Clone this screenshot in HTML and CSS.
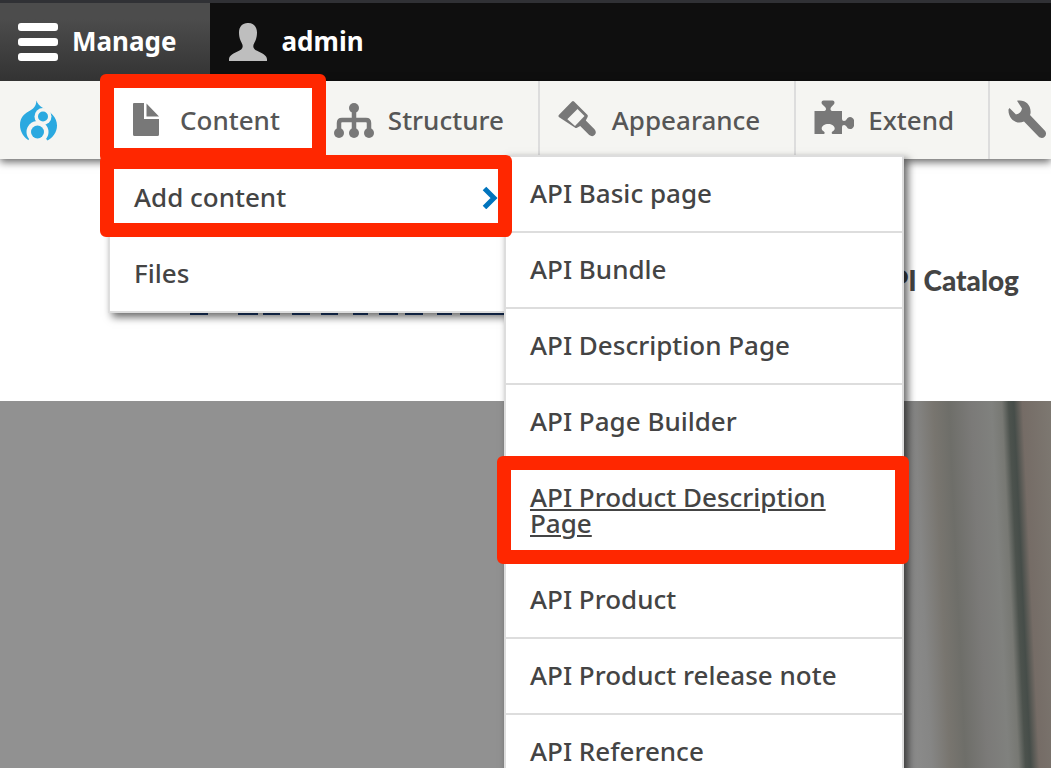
FILE: index.html
```
<!DOCTYPE html>
<html lang="en">
<head>
<meta charset="utf-8">
<title>API Catalog</title>
<link rel="stylesheet" href="styles.css">
</head>
<body>
<div class="page">
  <header class="toolbar">
    <div class="bar">
      <button class="bar-tab is-active" type="button">
        <svg class="bar-icon" viewBox="0 0 40 40" aria-hidden="true"><g fill="#fff"><rect y="2" width="40" height="8" rx="3"/><rect y="17" width="40" height="8" rx="3"/><rect y="32" width="40" height="8" rx="3"/></g></svg>
        Manage
      </button>
      <button class="bar-tab" type="button">
        <svg class="bar-icon" viewBox="0 0 40 40" aria-hidden="true"><path fill="#bebebe" d="M20 2c-5.300-.2-9 3.600-9 9.500 0 3 .4 5.200 1.500 8 .9 2.400 2.200 3.600 2.200 5.800 0 2.600-2.300 4-5.200 5.200C5.500 32.200 1 34.500 1 38.500V40h38v-1.500c0-4-4.500-6.300-8.500-8-2.900-1.200-5.200-2.600-5.200-5.200 0-2.200 1.300-3.400 2.200-5.800 1.100-2.800 1.500-5 1.500-8C29 5.600 25.300 1.800 20 2z"/></svg>
        admin
      </button>
    </div>
    <nav class="tray" aria-label="Administration">
      <ul class="menu">
        <li class="menu-item menu-home">
          <a class="menu-link" href="#" aria-label="Home">
            <svg class="logo" viewBox="0 0 38 42" aria-hidden="true"><path fill="#2ba9e0" d="M16.500.5c.8 3.500 3.300 5.500 6.500 7.500C30.500 12 37 17 37 25.500c0 6.500-4 12.500-10.500 15.500H10C4 38 0 32 0 25c0-7 4-11 8.500-13.500C13.500 9 16 6.500 16.500.5z"/><g fill="#f5f5f2"><circle cx="23" cy="16.500" r="8.500"/><circle cx="17.500" cy="32" r="11"/><path d="M9.500 38h16l3 4h-21z"/></g><g fill="#2ba9e0"><circle cx="23" cy="16.500" r="5"/><circle cx="17.500" cy="32" r="6.500"/></g></svg>
          </a>
        </li>
        <li class="menu-item is-open">
          <a class="menu-link" href="#">
            <svg class="menu-icon" viewBox="0 0 40 40" aria-hidden="true"><path fill="#787878" d="M8 3h10v16h15v15.500q0 1.500-1.500 1.500h-23Q7 36 7 34.500V4q0-1 1-1zM20.500 3.500L33 16.500H20.500z"/></svg>
            Content
          </a>
          <ul class="submenu">
            <li class="submenu-item">
              <a class="submenu-link" href="#">Add content
                <svg class="chevron" viewBox="0 0 16 24" aria-hidden="true"><path fill="none" stroke="#0074bd" stroke-width="5" d="M2.500 3.500L12 13l-9.500 9.500"/></svg>
              </a>
              <ul class="submenu submenu-nested">
                <li class="submenu-item"><a class="submenu-link" href="#">API Basic page</a></li>
                <li class="submenu-item"><a class="submenu-link" href="#">API Bundle</a></li>
                <li class="submenu-item"><a class="submenu-link" href="#">API Description Page</a></li>
                <li class="submenu-item"><a class="submenu-link" href="#">API Page Builder</a></li>
                <li class="submenu-item"><a class="submenu-link is-hovered" href="#">API Product Description Page</a><span class="mark mark-target"></span></li>
                <li class="submenu-item"><a class="submenu-link" href="#">API Product</a></li>
                <li class="submenu-item"><a class="submenu-link" href="#">API Product release note</a></li>
                <li class="submenu-item"><a class="submenu-link" href="#">API Reference</a></li>
              </ul>
              <span class="mark mark-add"></span>
            </li>
            <li class="submenu-item"><a class="submenu-link" href="#">Files</a></li>
          </ul>
          <span class="mark mark-content"></span>
        </li>
        <li class="menu-item">
          <a class="menu-link" href="#">
            <svg class="menu-icon" viewBox="0 0 40 40" aria-hidden="true"><g fill="#787878"><circle cx="20" cy="8" r="5"/><circle cx="5" cy="33" r="5"/><circle cx="20" cy="33" r="5"/><circle cx="35" cy="33" r="5"/></g><path fill="none" stroke="#787878" stroke-width="4.500" d="M20 8v25M5 33V23q0-3 3-3h24q3 0 3 3v10"/></svg>
            Structure
          </a>
        </li>
        <li class="menu-item">
          <a class="menu-link" href="#">
            <svg class="menu-icon" viewBox="0 0 40 40" aria-hidden="true"><path fill="#787878" d="M14 1.500q1-1 2 0L29.300 14.800q1 1 .3 2.200l-1.800 3.500 8.700 8.700q2.500 3 .3 5.600t-5.600.2l-9-9-3.200 1.800q-1.200.6-2.200-.3L.8 17q-.8-1 0-2z"/><path fill="#f5f5f2" d="M18 7.500l8.500 8.500-9.500 10-9-8z"/><path fill="#787878" d="M15.500 2L20 8.500l-11 11L1 16z"/></svg>
            Appearance
          </a>
        </li>
        <li class="menu-item">
          <a class="menu-link" href="#">
            <svg class="menu-icon" viewBox="0 0 40 40" aria-hidden="true"><path fill="#787878" d="M7.500 2.500Q7.500.5 9.500.5h9q2 0 2 2c0 3-4 3.500-4 6.500 0 1.500.8 2 2.500 2h9v8q0 2 2 2c3 0 2.500-4 6-4 3 0 4.500 3 4.500 6s-1.500 6-4.500 6c-3.500 0-3-4-6-4q-2 0-2 2v7H18.500q-1-.3-.8-1.300c.2-1.500 3-1.700 3-4.200s-3-4.500-6.500-4.500-6.500 2-6.500 4.500 2.800 2.700 3 4.200q.2 1-.8 1.300H.5V11h9c1.500 0 2.500-.5 2.500-2 0-3-4.500-3.500-4.500-6.500z"/></svg>
            Extend
          </a>
        </li>
        <li class="menu-item">
          <a class="menu-link" href="#" aria-label="Configuration">
            <svg class="menu-icon" viewBox="0 0 40 40" aria-hidden="true"><path fill="#787878" d="M9 .8c8-1.500 14.500 4 13.500 12.700l-.5 1.500 14.700 15.500c4 4.500-2 10-6.200 6L16 21.500c-8 3.500-16-2.500-15.500-12l1-1.500 6.500 6.500q5-1 6-6z"/></svg>
          </a>
        </li>
      </ul>
    </nav>
  </header>
  <main>
    <div class="site-header">
      <svg class="site-title" viewBox="0 0 314 4" aria-hidden="true"><path stroke="#1d3f77" stroke-width="2" d="M0 1h18M48 1h20M73 1h17M102 1h18M131 1h17M163 1h15M189 1h19M215 1h18M247 1h15M270 1h44"/></svg>
      <a class="site-link" href="#">API Catalog</a>
    </div>
    <div class="hero">
      <svg class="curtain" viewBox="0 0 171 368" preserveAspectRatio="none" aria-hidden="true">
        <defs><linearGradient id="folds" gradientUnits="userSpaceOnUse" x1="0" y1="0" x2="171" y2="-8">
          <stop offset="0" stop-color="#919191"/><stop offset=".2" stop-color="#868685"/><stop offset=".31" stop-color="#78756f"/><stop offset=".4" stop-color="#6e6e69"/><stop offset=".53" stop-color="#7b7a78"/><stop offset=".65" stop-color="#80817e"/><stop offset=".71" stop-color="#777873"/><stop offset=".75" stop-color="#4c524d"/><stop offset=".78" stop-color="#464d49"/><stop offset=".83" stop-color="#756c66"/><stop offset="1" stop-color="#7d7871"/>
        </linearGradient></defs>
        <rect width="171" height="368" fill="url(#folds)"/>
      </svg>
    </div>
  </main>
</div>
</body>
</html>
```
FILE: styles.css
```
* {
  box-sizing: border-box;
}

body {
  margin: 0;
  font-family: "Noto Sans", "Open Sans", sans-serif;
  font-size: 26px;
  font-weight: 500;
  line-height: 26px;
  color: #444;
  background: #fff;
}

a {
  color: inherit;
  text-decoration: none;
}

.page {
  display: flex;
  flex-direction: column;
  height: 100vh;
  overflow: hidden;
}

.toolbar {
  position: relative;
  z-index: 1;
}

.bar {
  display: flex;
  height: 81px;
  border-top: 3px solid #303135;
  background: #0f0f0f;
}

.bar-tab {
  display: flex;
  align-items: center;
  gap: 14px;
  padding: 0 33px 2px 18px;
  border: 0;
  background: none;
  color: #fff;
  font: inherit;
  font-weight: 700;
}

.bar-tab.is-active {
  background: linear-gradient(#4c4c4c 20%, #333);
}

.bar-icon,
.menu-icon {
  flex: none;
  width: 40px;
  height: 40px;
}

.tray {
  height: 78px;
  background: #f5f5f2;
  box-shadow: 0 3px 8px rgba(0, 0, 0, .6);
}

.menu,
.submenu {
  margin: 0;
  padding: 0;
  list-style: none;
}

.menu {
  display: flex;
  height: 100%;
}

.menu-item {
  position: relative;
  flex: none;
  border-right: 2px solid #ddd;
}

.menu-item.is-open {
  z-index: 1;
  background: #fff;
}

.menu-link {
  display: flex;
  align-items: center;
  gap: 14px;
  height: 100%;
  padding: 0 34px 0 18px;
  color: #565656;
}

.menu-home {
  width: 108px;
}

.menu-home .menu-link {
  padding: 2px 0 0 20px;
}

.logo {
  width: 38px;
  height: 42px;
}

.submenu {
  position: absolute;
  top: 100%;
  left: 0;
  width: 400px;
  border: 2px solid #ddd;
  background: #fff;
  box-shadow: 4px 4px 8px rgba(0, 0, 0, .6);
}

.submenu-nested {
  top: -6px;
  left: 394px;
}

.submenu-item {
  position: relative;
}

.submenu-item + .submenu-item {
  border-top: 2px solid #ddd;
}

.submenu-link {
  display: flex;
  justify-content: space-between;
  align-items: center;
  padding: 23px 24px 25px;
}

.submenu-link.is-hovered {
  text-decoration: underline;
}

.chevron {
  width: 16px;
  height: 24px;
  margin: 0 -16px 0 0;
}

.mark {
  position: absolute;
  z-index: 2;
  border: 14px solid #ff2700;
  border-radius: 6px;
  pointer-events: none;
}

.mark-content {
  inset: -7px -12px -3px -8px;
}

.mark-add {
  inset: -6px -6px -2px -10px;
}

.mark-target {
  inset: -5px -7px -3px -9px;
}

.site-header {
  display: flex;
  justify-content: space-between;
  align-items: center;
  height: 242px;
  padding: 0 32px 0 190px;
}

.site-title {
  width: 314px;
  height: 4px;
  margin-top: 70px;
}

.site-link {
  font-family: Lato, sans-serif;
  font-size: 28px;
  font-weight: 900;
}

main {
  display: flex;
  flex-direction: column;
  flex: 1;
}

.hero {
  display: flex;
  flex: 1;
  justify-content: flex-end;
  background: #919191;
}

.curtain {
  width: 171px;
  height: 100%;
}
```
